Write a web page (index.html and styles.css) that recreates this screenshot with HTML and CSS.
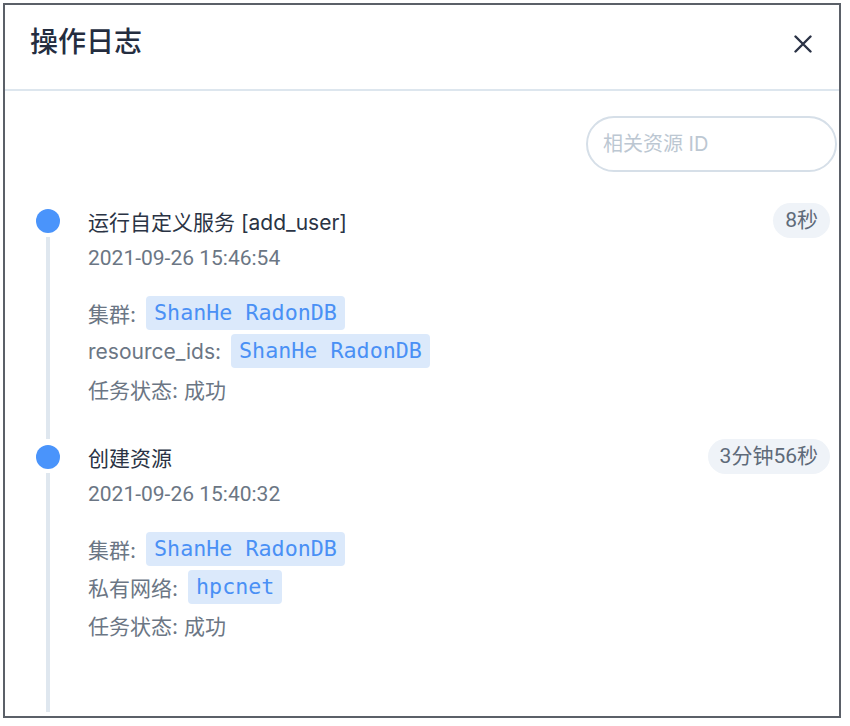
FILE: index.html
```html
<!DOCTYPE html>
<html lang="zh-CN">
<head>
<meta charset="utf-8">
<title>操作日志</title>
<link rel="stylesheet" href="styles.css">
</head>
<body>
<div class="dialog">
  <div class="header">
    <div class="heading">操作日志</div>
    <button class="close" aria-label="关闭">
      <svg width="18" height="18" viewBox="0 0 18 18"><path d="M1.5 1.5L16.5 16.5M16.5 1.5L1.5 16.5" stroke="#2b3346" stroke-width="2.4" stroke-linecap="round" fill="none"/></svg>
    </button>
  </div>
  <div class="body">
    <div class="search-row">
      <input class="search" type="text" placeholder="相关资源 ID">
    </div>
    <div class="timeline">
      <div class="item">
        <div class="rail"><div class="dot"></div><div class="line"></div></div>
        <div class="content">
          <div class="head">
            <div class="title">运行自定义服务 [add_user]</div>
            <div class="badge">8秒</div>
          </div>
          <div class="date">2021-09-26 15:46:54</div>
          <div class="details">
            <div class="row"><span>集群:</span><span class="tag">ShanHe RadonDB</span></div>
            <div class="row"><span>resource_ids:</span><span class="tag">ShanHe RadonDB</span></div>
            <div class="row"><span>任务状态: 成功</span></div>
          </div>
        </div>
      </div>
      <div class="item">
        <div class="rail"><div class="dot"></div><div class="line"></div></div>
        <div class="content">
          <div class="head">
            <div class="title">创建资源</div>
            <div class="badge">3分钟56秒</div>
          </div>
          <div class="date">2021-09-26 15:40:32</div>
          <div class="details">
            <div class="row"><span>集群:</span><span class="tag">ShanHe RadonDB</span></div>
            <div class="row"><span>私有网络:</span><span class="tag">hpcnet</span></div>
            <div class="row"><span>任务状态: 成功</span></div>
          </div>
        </div>
      </div>
    </div>
  </div>
</div>
</body>
</html>
```
FILE: styles.css
```css
html, body {
  margin: 0;
  background: #ffffff;
}
body {
  font-family: Roboto, "Noto Sans CJK SC", sans-serif;
}
.dialog {
  margin: 3px;
  width: 838px;
  height: 715px;
  box-sizing: border-box;
  border: 2px solid #5b6068;
  background: #fff;
  display: flex;
  flex-direction: column;
  overflow: hidden;
}
.header {
  flex: none;
  height: 86px;
  box-sizing: border-box;
  display: flex;
  justify-content: space-between;
  align-items: flex-start;
  padding: 17px 18px 0 25px;
  border-bottom: 2px solid #dde6ee;
}
.heading {
  font-family: "Noto Sans CJK SC", sans-serif;
  font-size: 28px;
  font-weight: 500;
  line-height: 36px;
  color: #242d3f;
}
.close {
  width: 36px;
  height: 36px;
  padding: 0;
  margin-top: 4px;
  border: none;
  background: transparent;
  display: flex;
  align-items: center;
  justify-content: center;
}
.body {
  flex: 1;
  min-height: 0;
  display: flex;
  flex-direction: column;
  padding: 25px 2px 4px 31px;
}
.search-row {
  display: flex;
  justify-content: flex-end;
}
.search {
  width: 251px;
  height: 56px;
  box-sizing: border-box;
  border: 2px solid #d6dfe8;
  border-radius: 28px;
  padding: 0 15px;
  font-family: Inter, "Noto Sans CJK SC", sans-serif;
  font-size: 20px;
  color: #2a3344;
  outline: none;
  background: #fff;
}
.search::placeholder {
  color: #bcc7d2;
}
.timeline {
  flex: 1;
  margin-top: 31px;
  display: flex;
  flex-direction: column;
  padding-right: 7px;
}
.item {
  display: flex;
  gap: 28px;
}
.item:last-child {
  flex: 1;
}
.rail {
  width: 24px;
  flex: none;
  display: flex;
  flex-direction: column;
  align-items: center;
  padding-top: 6px;
}
.dot {
  width: 24px;
  height: 24px;
  border-radius: 50%;
  background: #4a94fb;
  flex: none;
}
.line {
  width: 4px;
  flex: 1;
  background: #dfe7ef;
  margin-top: 4px;
  margin-bottom: 0;
}
.content {
  flex: 1;
  padding-bottom: 33px;
}
.head {
  height: 35px;
  display: flex;
  justify-content: space-between;
  align-items: center;
}
.title {
  font-family: Inter, "Noto Sans CJK SC", sans-serif;
  font-size: 21px;
  color: #2a3344;
}
.badge {
  height: 35px;
  line-height: 35px;
  padding: 0 12px;
  border-radius: 18px;
  background: #eff3f8;
  color: #5e6a79;
  font-size: 21px;
}
.date {
  margin-top: 5px;
  line-height: 30px;
  font-size: 21px;
  color: #6b7684;
}
.details {
  margin-top: 23px;
  display: flex;
  flex-direction: column;
  gap: 4px;
}
.row {
  height: 34px;
  display: flex;
  align-items: center;
  gap: 10px;
  font-family: Inter, "Noto Sans CJK SC", sans-serif;
  font-size: 21px;
  color: #6b7684;
}
.tag {
  height: 34px;
  line-height: 34px;
  padding: 0 8px;
  border-radius: 4px;
  background: #dbe9fb;
  color: #4a90f5;
  font-family: "DejaVu Sans Mono", monospace;
  font-size: 21.7px;
}
```
